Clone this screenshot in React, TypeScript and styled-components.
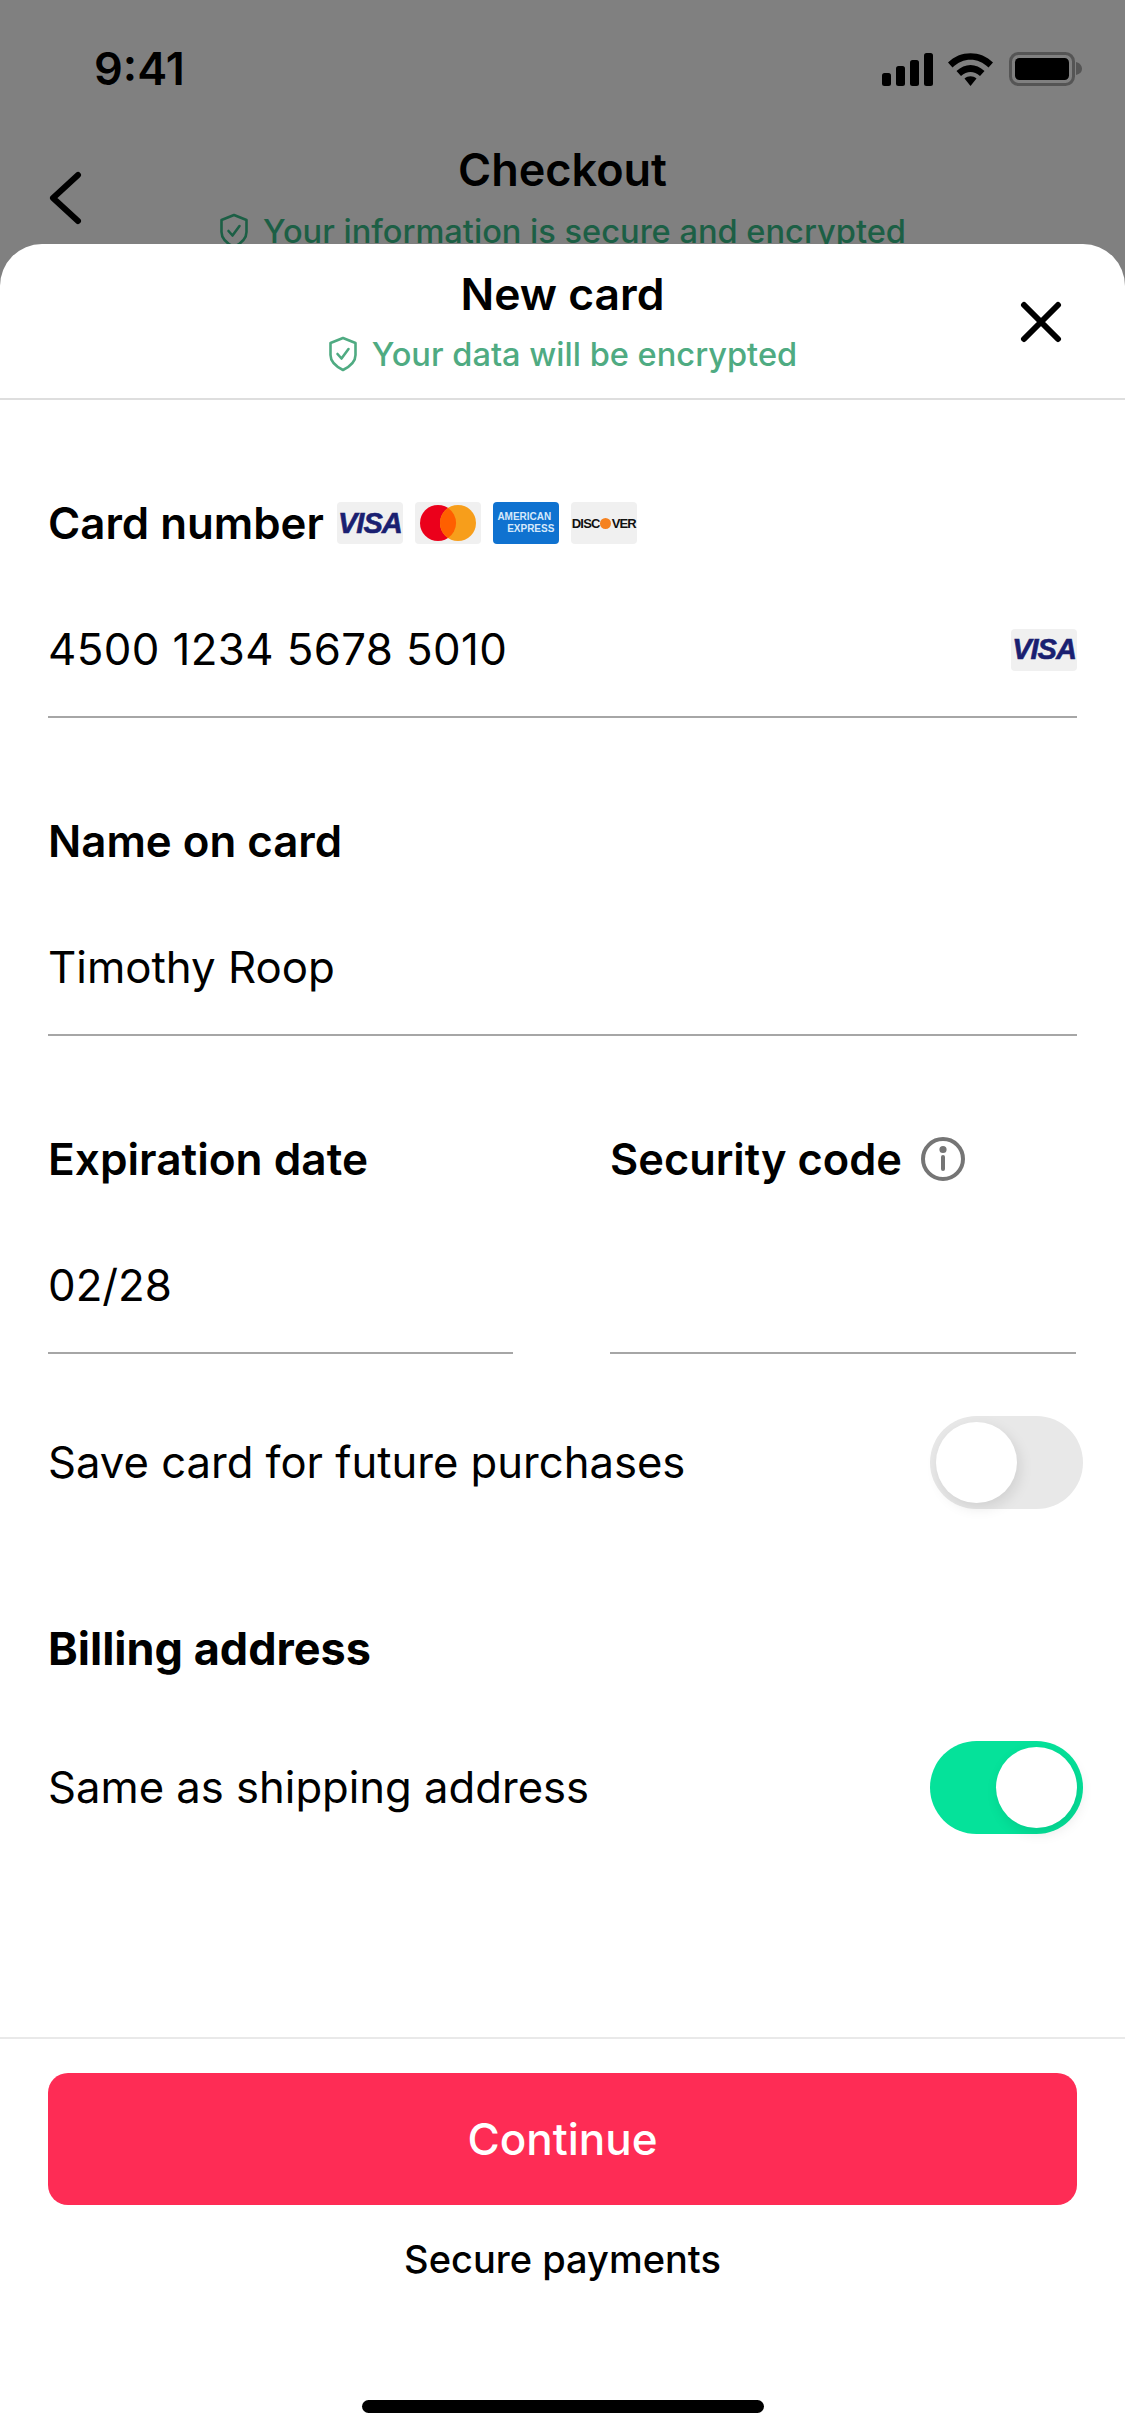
import React from "react";
import styled, { createGlobalStyle } from "styled-components";

const Global = createGlobalStyle`
  html, body { margin: 0; padding: 0; background: #808080; }
  * { box-sizing: border-box; }
  body { font-family: Inter, "Liberation Sans", sans-serif; color: #000; }
`;

const Page = styled.div`
  position: relative;
  width: 1125px;
  height: 2436px;
  overflow: hidden;
  background: #808080;
`;

const StatusBar = styled.div`
  display: flex;
  align-items: center;
  justify-content: space-between;
  height: 86px;
  padding: 52px 43px 0 94px;
`;

const Time = styled.span`
  font-size: 45px;
  font-weight: 600;
  line-height: 36px;
`;

const StatusIcons = styled.svg`
  display: block;
  width: 200px;
  height: 34px;
`;

const Nav = styled.div`
  position: relative;
  display: flex;
  flex-direction: column;
  align-items: center;
  padding-top: 54px;
`;

const BackIcon = styled.svg`
  position: absolute;
  left: 48px;
  top: 85px;
  width: 34px;
  height: 54px;
`;

const NavTitle = styled.div`
  font-size: 45px;
  font-weight: 600;
  line-height: 60px;
`;

const SecureLine = styled.div<{ $color: string }>`
  display: flex;
  align-items: center;
  justify-content: center;
  gap: 14px;
  color: ${(p) => p.$color};
  font-size: 32.6px;
  font-weight: 500;
  line-height: 48px;
`;

const ShieldIcon = styled.svg`
  width: 30px;
  height: 36px;
  flex: none;
`;

const NavSub = styled(SecureLine)`
  margin-top: 7px;
`;

const Sheet = styled.div`
  position: absolute;
  left: 0;
  right: 0;
  top: 244px;
  bottom: 0;
  display: flex;
  flex-direction: column;
  background: #fff;
  border-radius: 42px 42px 0 0;
`;

const SheetHeader = styled.header`
  position: relative;
  height: 156px;
  padding-top: 23px;
  display: flex;
  flex-direction: column;
  align-items: center;
  border-bottom: 2px solid #dedede;
`;

const SheetTitle = styled.div`
  font-size: 44.4px;
  font-weight: 600;
  line-height: 54px;
  margin-bottom: 9px;
`;

const CloseIcon = styled.svg`
  position: absolute;
  left: 1020px;
  top: 57px;
  width: 42px;
  height: 42px;
`;

const Form = styled.main`
  flex: 1;
  padding: 94px 48px 0;
`;

const Label = styled.div`
  display: flex;
  align-items: center;
  height: 60px;
  padding-bottom: 2px;
  font-size: 43.8px;
  font-weight: 600;
`;

const ExpiryLabel = styled(Label)`
  font-size: 44.2px;
`;

const SecurityLabel = styled(Label)`
  font-size: 43.4px;
`;

const CardLogos = styled.div`
  display: flex;
  gap: 12px;
  margin-left: 13px;
`;

const FieldBlock = styled.div`
  margin-bottom: 94px;
`;

const Columns = styled.div`
  display: grid;
  grid-template-columns: 465px 466px;
  column-gap: 97px;
  margin-bottom: 62px;
`;

const ValueRow = styled.div<{ $spaced?: boolean }>`
  display: flex;
  align-items: center;
  justify-content: space-between;
  height: 164px;
  padding-top: 29px;
  border-bottom: 2px solid #a6a6a6;
  font-size: 43.8px;
  font-weight: 400;
  letter-spacing: ${(p) => (p.$spaced ? "0.4px" : "0")};
`;

const ShortField = styled.div``;

const InfoIcon = styled.svg`
  width: 44px;
  height: 44px;
  margin-left: 19px;
`;

const ToggleRow = styled.div`
  display: flex;
  align-items: center;
  justify-content: space-between;
  height: 93px;
  margin-right: -6px;
  padding-bottom: 1px;
  font-size: 43.6px;
  font-weight: 400;
`;

const Billing = styled(Label)`
  margin: 110px 0 62px;
  font-size: 45px;
  font-weight: 700;
`;

const Track = styled.div<{ $on: boolean }>`
  position: relative;
  width: 153px;
  height: 93px;
  border-radius: 47px;
  background: ${(p) => (p.$on ? "#05e29a" : "#e8e8e8")};
`;

const Thumb = styled.div<{ $on: boolean }>`
  position: absolute;
  top: 6px;
  left: ${(p) => (p.$on ? "66px" : "6px")};
  width: 81px;
  height: 81px;
  border-radius: 50%;
  background: #fff;
  box-shadow: 3px 5px 14px rgba(0, 0, 0, 0.1);
`;

const Footer = styled.footer`
  height: 399px;
  padding: 34px 48px 0;
  display: flex;
  flex-direction: column;
  align-items: center;
  border-top: 2px solid #e9e9e9;
`;

const ContinueButton = styled.button`
  width: 1029px;
  height: 132px;
  border: 0;
  border-radius: 20px;
  background: #fe2c55;
  color: #fff;
  font-family: inherit;
  font-size: 44px;
  font-weight: 500;
`;

const Secure = styled.div`
  margin-top: 24px;
  font-size: 38px;
  font-weight: 500;
  line-height: 60px;
`;

const HomeBar = styled.div`
  width: 402px;
  height: 13px;
  margin-top: 111px;
  border-radius: 7px;
  background: #000;
`;

const Logo = styled.div<{ $bg: string }>`
  display: flex;
  align-items: center;
  justify-content: center;
  flex: none;
  width: 66px;
  height: 42px;
  border-radius: 4px;
  background: ${(p) => p.$bg};
  overflow: hidden;
`;

const VisaText = styled.span`
  color: #1a1f71;
  font-family: "Liberation Sans", sans-serif;
  font-size: 29px;
  font-weight: 700;
  font-style: italic;
  letter-spacing: -1px;
  -webkit-text-stroke: 0.6px #1a1f71;
`;

const MasterSvg = styled.svg`
  width: 66px;
  height: 42px;
`;

const AmexText = styled.div`
  display: flex;
  flex-direction: column;
  color: #d6e9fb;
  font-family: "Liberation Sans", sans-serif;
  font-size: 10px;
  font-weight: 700;
  line-height: 12px;
  width: 57px;
`;

const AmexLine = styled.span<{ $right?: boolean }>`
  text-align: ${(p) => (p.$right ? "right" : "left")};
  white-space: nowrap;
`;

const DiscoverText = styled.span`
  display: flex;
  align-items: center;
  color: #111;
  font-family: "Liberation Sans", sans-serif;
  font-size: 13px;
  font-weight: 700;
  letter-spacing: -0.8px;
`;

const Dot = styled.span`
  width: 11px;
  height: 11px;
  margin: 0 0.5px;
  border-radius: 50%;
  background: #f58220;
`;

const VisaLogo = () => (
  <Logo $bg="#f0f0f0">
    <VisaText>VISA</VisaText>
  </Logo>
);

const Shield = ({ color }: { color: string }) => (
  <ShieldIcon viewBox="0 0 30 36" fill="none" stroke={color} strokeWidth="2.6" strokeLinejoin="round" strokeLinecap="round">
    <path d="M15 2 L27.5 7 V19 C27.5 26 21 31 15 34 C9 31 2.5 26 2.5 19 V7 Z" />
    <path d="M9.5 18 L13.5 22.5 L20.5 13" />
  </ShieldIcon>
);

export default function App() {
  return (
    <Page>
      <Global />
      <StatusBar>
        <Time>9:41</Time>
        <StatusIcons viewBox="0 0 200 34">
          <rect x="0" y="21" width="9" height="13" rx="2.5" fill="#000" />
          <rect x="14" y="14" width="9" height="20" rx="2.5" fill="#000" />
          <rect x="28" y="8" width="9" height="26" rx="2.5" fill="#000" />
          <rect x="42" y="1" width="9" height="33" rx="2.5" fill="#000" />
          <path d="M66 10.5 C78 -2 99 -2 111 10.5 L106.5 15.5 C96 5 81 5 70.5 15.5 Z" fill="#000" />
          <path d="M74.5 19 C83 11 94 11 102.5 19 L98 24 C92 18.5 85 18.5 79 24 Z" fill="#000" />
          <path d="M82.5 26.5 C86 23.5 91 23.5 94.5 26.5 L88.5 34 Z" fill="#000" />
          <rect x="128.5" y="1.5" width="63" height="31" rx="8" fill="none" stroke="#555" strokeWidth="3" />
          <rect x="133" y="6" width="54" height="22" rx="4.5" fill="#000" />
          <path d="M194 10 C198 11 200 14 200 17 C200 20 198 22 194 23 Z" fill="#555" />
        </StatusIcons>
      </StatusBar>
      <Nav>
        <BackIcon viewBox="0 0 34 54" fill="none" stroke="#000" strokeWidth="6" strokeLinecap="round" strokeLinejoin="round">
          <path d="M30 4 L5 27 L30 50" />
        </BackIcon>
        <NavTitle>Checkout</NavTitle>
        <NavSub $color="#1c5f45">
          <Shield color="#1c5f45" />
          Your information is secure and encrypted
        </NavSub>
      </Nav>
      <Sheet>
        <SheetHeader>
          <SheetTitle>New card</SheetTitle>
          <SecureLine $color="#4fab82">
            <Shield color="#4fab82" />
            Your data will be encrypted
          </SecureLine>
          <CloseIcon viewBox="0 0 42 42" fill="none" stroke="#000" strokeWidth="6" strokeLinecap="round">
            <path d="M4 4 L38 38 M38 4 L4 38" />
          </CloseIcon>
        </SheetHeader>
        <Form>
          <FieldBlock>
            <Label>
              Card number
              <CardLogos>
                <VisaLogo />
                <Logo $bg="#f0f0f0">
                  <MasterSvg viewBox="0 0 66 42">
                    <circle cx="23" cy="21" r="18" fill="#eb001b" />
                    <circle cx="43" cy="21" r="18" fill="#f79e1b" />
                    <path d="M33 6 A18 18 0 0 1 33 36 A18 18 0 0 1 33 6 Z" fill="#ff5f00" />
                  </MasterSvg>
                </Logo>
                <Logo $bg="#0f72d0">
                  <AmexText>
                    <AmexLine>AMERICAN</AmexLine>
                    <AmexLine $right>EXPRESS</AmexLine>
                  </AmexText>
                </Logo>
                <Logo $bg="#f0f0f0">
                  <DiscoverText>
                    DISC
                    <Dot />
                    VER
                  </DiscoverText>
                </Logo>
              </CardLogos>
            </Label>
            <ValueRow $spaced>
              4500 1234 5678 5010
              <VisaLogo />
            </ValueRow>
          </FieldBlock>
          <FieldBlock>
            <Label>Name on card</Label>
            <ValueRow>Timothy Roop</ValueRow>
          </FieldBlock>
          <Columns>
            <ShortField>
              <ExpiryLabel>Expiration date</ExpiryLabel>
              <ValueRow>02/28</ValueRow>
            </ShortField>
            <ShortField>
              <SecurityLabel>
                Security code
                <InfoIcon viewBox="0 0 44 44" fill="none" stroke="#757575" strokeWidth="4" strokeLinecap="round">
                  <circle cx="22" cy="22" r="20" />
                  <path d="M22 20 V32" />
                  <circle cx="22" cy="12.5" r="1.6" fill="#757575" />
                </InfoIcon>
              </SecurityLabel>
              <ValueRow />
            </ShortField>
          </Columns>
          <ToggleRow>
            Save card for future purchases
            <Track $on={false}>
              <Thumb $on={false} />
            </Track>
          </ToggleRow>
          <Billing>Billing address</Billing>
          <ToggleRow>
            Same as shipping address
            <Track $on>
              <Thumb $on />
            </Track>
          </ToggleRow>
        </Form>
        <Footer>
          <ContinueButton>Continue</ContinueButton>
          <Secure>Secure payments</Secure>
          <HomeBar />
        </Footer>
      </Sheet>
    </Page>
  );
}
